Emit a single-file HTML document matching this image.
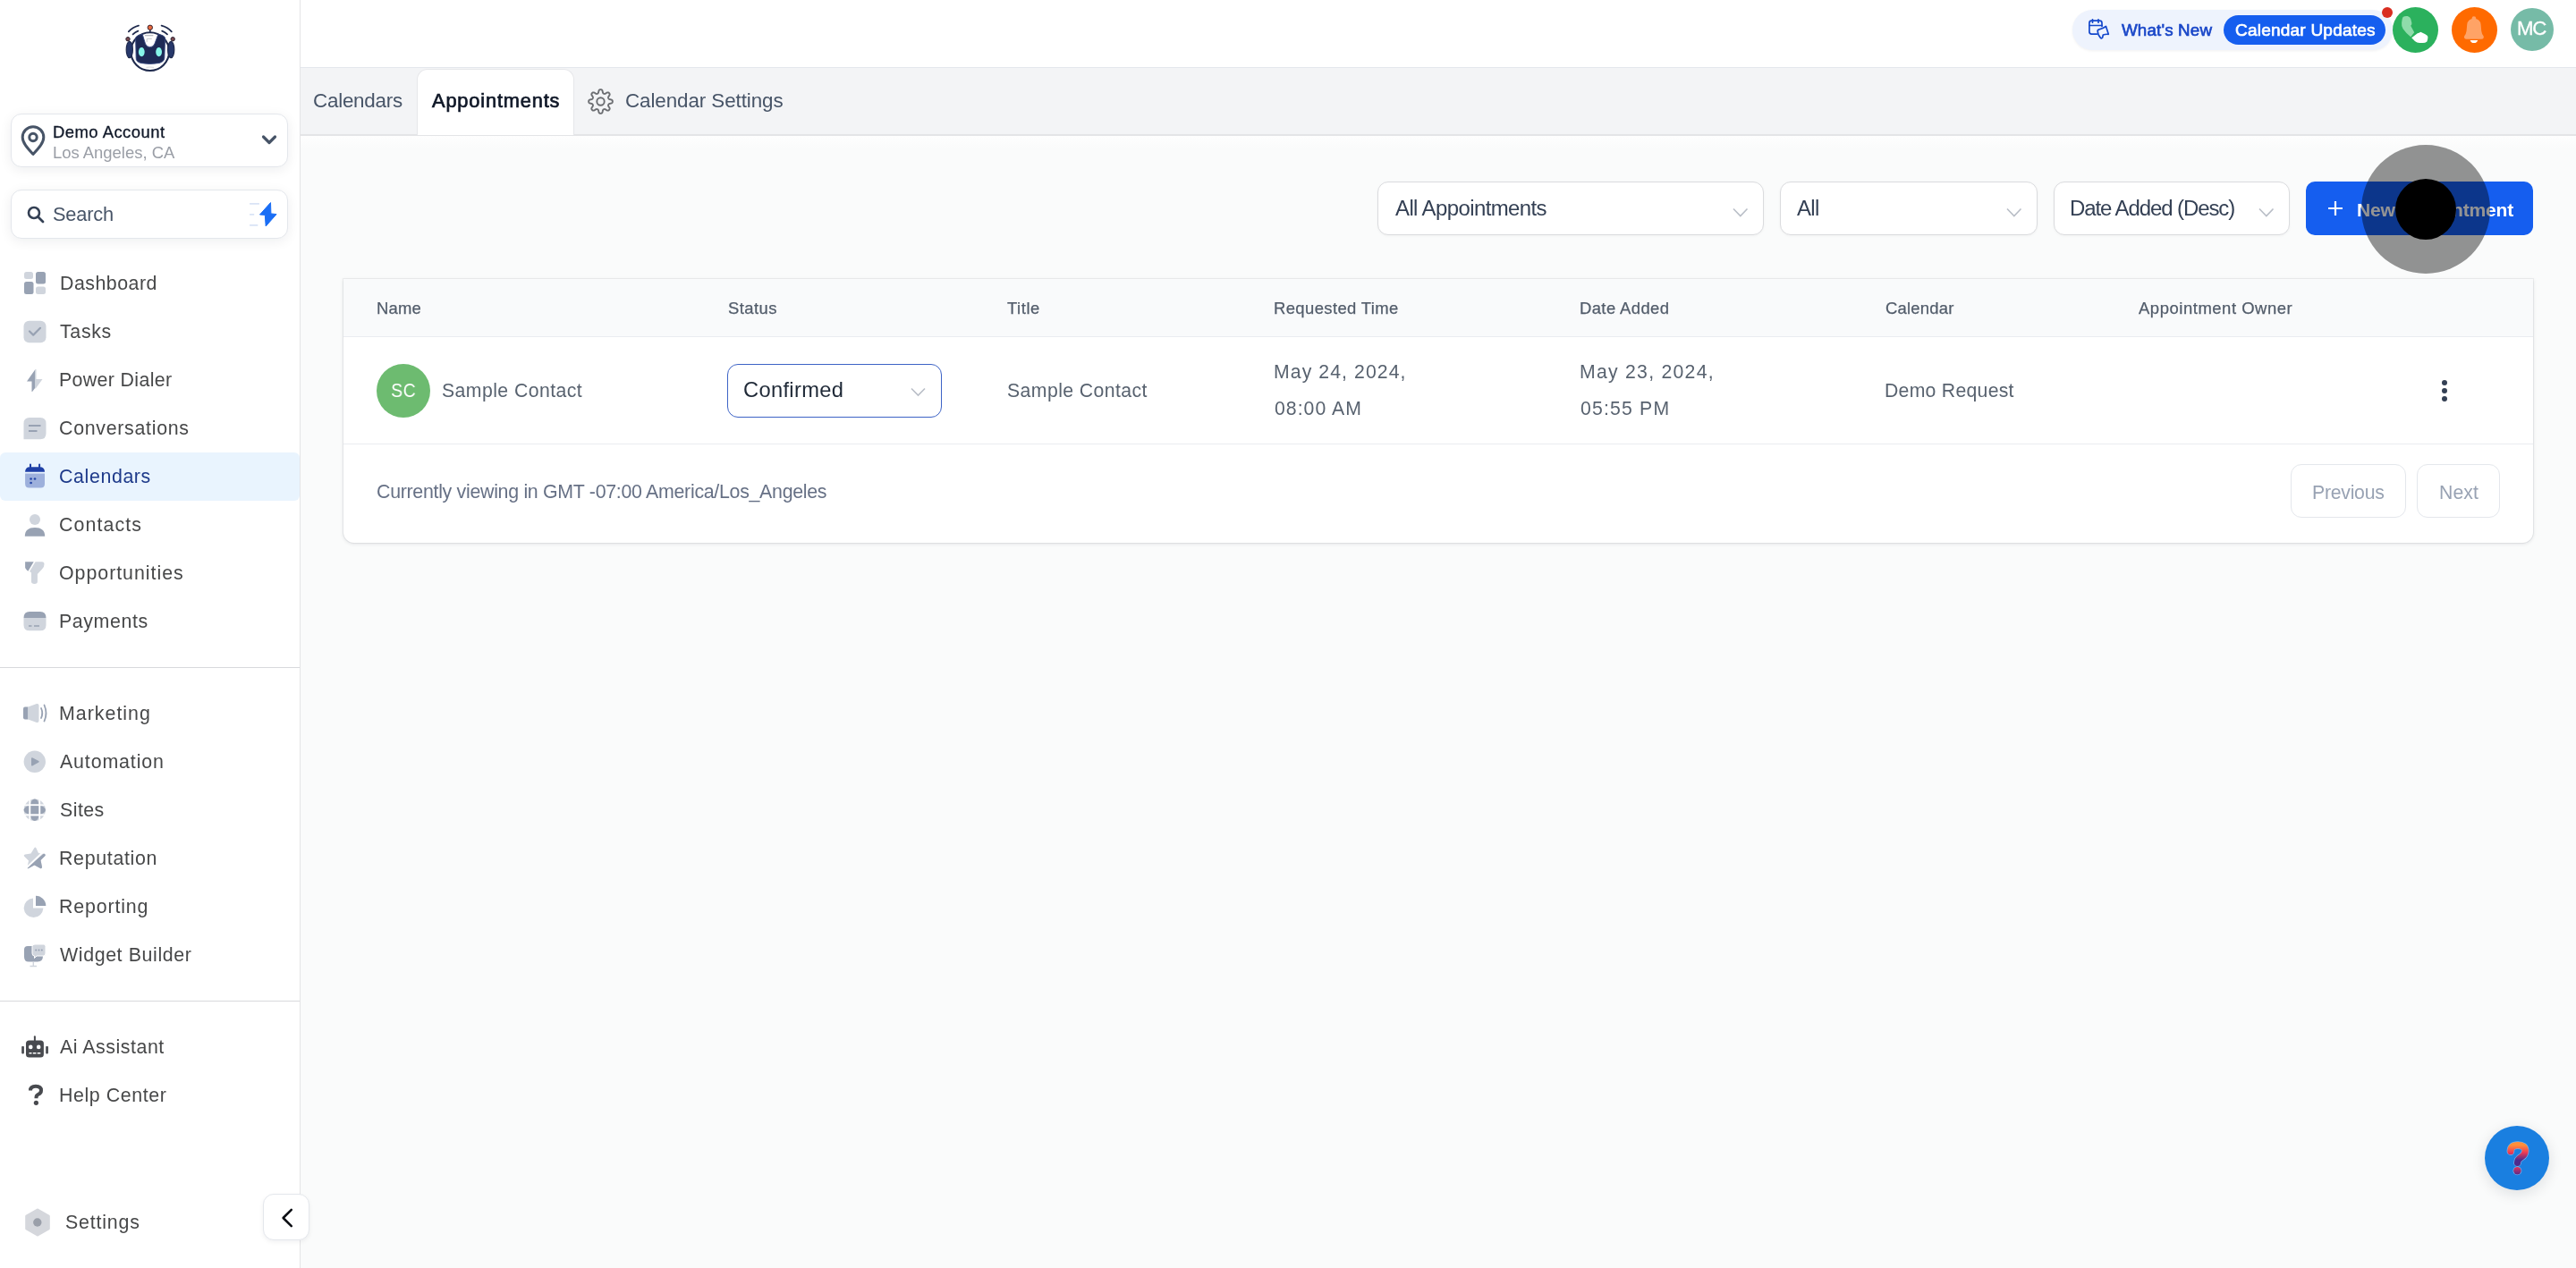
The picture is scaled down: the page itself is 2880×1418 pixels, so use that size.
<!DOCTYPE html>
<html><head><meta charset="utf-8">
<style>
html,body{margin:0;padding:0;width:2880px;height:1418px;overflow:hidden;background:#fafbfb;}
body{position:relative;font-family:"Liberation Sans",sans-serif;}
.t{position:absolute;white-space:nowrap;line-height:normal;font-family:"Liberation Sans",sans-serif;will-change:transform;}
.a{position:absolute;box-sizing:border-box;}
svg{position:absolute;overflow:visible;}
@media (max-width:1500px){html{zoom:0.5;}}
</style></head><body>
<!-- main background -->
<div class="a" style="left:336px;top:152px;width:2544px;height:1266px;background:#fafbfb;"></div>
<!-- sidebar -->
<div class="a" style="left:0;top:0;width:336px;height:1418px;background:#ffffff;border-right:1px solid #e4e4e6;"></div>
<!-- header -->
<div class="a" style="left:336px;top:0;width:2544px;height:76px;background:#ffffff;border-bottom:1px solid #e4e7ec;"></div>
<!-- tab bar -->
<div class="a" style="left:336px;top:76px;width:2544px;height:76px;background:#f3f4f6;border-bottom:2px solid #e3e4e7;"></div>
<div class="a" style="left:336px;top:152px;width:2544px;height:14px;background:linear-gradient(#fefefe,#fafbfb);"></div>
<div class="a" style="left:466px;top:77px;width:176px;height:74px;background:#ffffff;border-radius:12px 12px 0 0;border:1px solid #e6e7ea;border-bottom:none;"></div>

<!-- logo -->
<svg style="left:130px;top:20px" width="80" height="70" viewBox="0 0 80 70">
  <g fill="none" stroke="#1f2a4d" stroke-linecap="round" stroke-width="1.8">
    <path d="M13.8 15.3 Q18 10.6 25 8.6"/><path d="M18.6 18.3 Q21 16 24.4 14.6"/>
    <path d="M61.8 15.3 Q57.6 10.6 50.6 8.6"/><path d="M57 18.3 Q54.6 16 51.2 14.6"/>
  </g>
  <circle cx="37.7" cy="37.6" r="21.4" fill="#fff" stroke="#1f2a4d" stroke-width="2.1"/>
  <line x1="37.8" y1="13" x2="37.8" y2="16.5" stroke="#1f2a4d" stroke-width="1.6"/>
  <circle cx="37.8" cy="10.8" r="2.7" fill="#e86a3e" stroke="#3a2430" stroke-width="1"/>
  <circle cx="13" cy="23.7" r="2.2" fill="#7b4a4f" stroke="#2a2233" stroke-width="1"/>
  <circle cx="63.2" cy="23.7" r="2.2" fill="#7b4a4f" stroke="#2a2233" stroke-width="1"/>
  <ellipse cx="14.8" cy="35.5" rx="3.6" ry="9.2" fill="#27386b" stroke="#1f2a4d" stroke-width="1.2"/>
  <ellipse cx="61.2" cy="35.5" rx="3.6" ry="9.2" fill="#27386b" stroke="#1f2a4d" stroke-width="1.2"/>
  <path d="M21.6 22 Q23 19.3 29.2 18.2 L32.5 29 Q34 32.7 37.7 32.7 Q41.4 32.7 42.9 29 L46.9 18.2 Q53.2 19.3 54.6 22 L53.8 45 Q53.5 49 48 50.5 Q37.7 52.5 27.4 50.5 Q22 49 22.2 45 Z" fill="#1e2a56" stroke="#34467e" stroke-width="0.9"/>
  <path d="M32 19.7 H41.4" stroke="#b9bcc2" stroke-width="1.3"/>
  <path d="M34.2 27 V23.4 H39.8" fill="none" stroke="#c8cbd0" stroke-width="1"/>
  <path d="M33.5 55.4 Q37.7 54.6 42 55.4" fill="none" stroke="#d4d6da" stroke-width="1"/>
  <ellipse cx="28.3" cy="38.1" rx="3.4" ry="5.1" fill="#86f5e8"/>
  <ellipse cx="47.6" cy="38.1" rx="3.4" ry="5.1" fill="#86f5e8"/>
</svg>

<!-- account box -->
<div class="a" style="left:12px;top:127px;width:310px;height:60px;background:#fff;border:1px solid #e4e7ec;border-radius:12px;box-shadow:0 3px 14px rgba(16,24,40,0.07);"></div>
<svg style="left:22px;top:140px" width="30" height="35" viewBox="0 0 30 35">
  <path d="M15 32.5 C8 25 3.2 19.5 3.2 13.5 A11.8 11.8 0 0 1 26.8 13.5 C26.8 19.5 22 25 15 32.5 Z" fill="none" stroke="#475467" stroke-width="3" stroke-linejoin="round"/>
  <circle cx="15" cy="13.5" r="4.2" fill="none" stroke="#475467" stroke-width="3"/>
</svg>
<svg style="left:292px;top:150px" width="18" height="13" viewBox="0 0 18 13">
  <path d="M2.5 3 L9 9.5 L15.5 3" fill="none" stroke="#475467" stroke-width="3.2" stroke-linecap="round" stroke-linejoin="round"/>
</svg>

<!-- search box -->
<div class="a" style="left:12px;top:212px;width:310px;height:55px;background:#fff;border:1px solid #e4e7ec;border-radius:12px;box-shadow:0 3px 14px rgba(16,24,40,0.07);"></div>
<svg style="left:30px;top:230px" width="20" height="20" viewBox="0 0 20 20">
  <circle cx="8" cy="8" r="6" fill="none" stroke="#344054" stroke-width="2.6"/>
  <path d="M12.5 12.5 L18 18" stroke="#344054" stroke-width="2.8" stroke-linecap="round"/>
</svg>
<svg style="left:277px;top:225px" width="34" height="30" viewBox="0 0 34 30">
  <path d="M2.1 2.9 H12.9 M2.1 14.9 H7.2 M2.1 26.9 H11.3" stroke="#d9e3f6" stroke-width="1.8"/>
  <path d="M25.5 1.6 L13.5 15 L19.3 15.4 L20.2 28 L32 14.6 L25.9 13.9 Z" fill="#1a6ef5" stroke="#1a6ef5" stroke-width="1" stroke-linejoin="round"/>
</svg>

<!-- nav highlight -->
<div class="a" style="left:0;top:506px;width:335px;height:54px;background:#e9f4fe;border-radius:6px;"></div>

<!-- nav icons -->
<svg style="left:26px;top:303px" width="26" height="27" viewBox="0 0 26 27">
  <rect x="1" y="1" width="10" height="8" rx="2.5" fill="#d0d5dd"/>
  <rect x="14" y="1" width="11" height="13.5" rx="2.5" fill="#98a2b3"/>
  <rect x="1" y="12" width="10.5" height="14" rx="2.5" fill="#98a2b3"/>
  <rect x="14" y="17.5" width="11" height="8.5" rx="2.5" fill="#d0d5dd"/>
</svg>
<svg style="left:26px;top:358px" width="26" height="26" viewBox="0 0 26 26">
  <rect x="0.5" y="0.8" width="25" height="24.4" rx="6" fill="#d0d5dd"/>
  <path d="M7 12.5 L11.2 16.6 L19 8.8" fill="none" stroke="#98a2b3" stroke-width="2.2" stroke-linecap="round" stroke-linejoin="round"/>
</svg>
<svg style="left:29px;top:412px" width="20" height="27" viewBox="0 0 20 27">
  <path d="M10.5 1 L1 14.5 L6.5 14.5 L6.5 25.5 Q6.5 26.5 7.5 25.5 L10.5 21.5 Z" fill="#98a2b3"/>
  <path d="M10.5 1 L11.5 1 L11.5 12 L18.5 12 L10.5 23 Z" fill="#d0d5dd"/>
</svg>
<svg style="left:26px;top:466px" width="26" height="26" viewBox="0 0 26 26">
  <path d="M7 1 H19 Q25.5 1 25.5 7.5 V18.5 Q25.5 25.3 19 25.3 H0.5 V7.5 Q0.5 1 7 1 Z" fill="#d0d5dd"/>
  <path d="M6 10 H19.5 M6 16 H15.5" stroke="#98a2b3" stroke-width="2.2"/>
</svg>
<svg style="left:27px;top:518px" width="24" height="28" viewBox="0 0 24 28">
  <path d="M1.1 9.8 Q1.1 4.2 6.5 4.2 H17.6 Q23 4.2 23 9.8 Z" fill="#1f40a6"/>
  <path d="M1.1 11.6 H23 V23 Q23 27.6 18.5 27.6 H5.6 Q1.1 27.6 1.1 23 Z" fill="#9db0dc"/>
  <path d="M7 1.6 V5.5 M17.1 1.6 V5.5" stroke="#1f40a6" stroke-width="2" stroke-linecap="round"/>
  <circle cx="7.6" cy="17.5" r="1.35" fill="#2546a8"/><circle cx="12" cy="17.5" r="1.35" fill="#2546a8"/><circle cx="7.6" cy="22" r="1.35" fill="#2546a8"/>
</svg>
<svg style="left:27px;top:574px" width="24" height="27" viewBox="0 0 24 27">
  <circle cx="12" cy="6.9" r="6" fill="#d0d5dd"/>
  <path d="M0.8 25.8 Q0.8 16 12 16 Q23.2 16 23.2 25.8 Z" fill="#98a2b3"/>
</svg>
<svg style="left:27px;top:627px" width="24" height="27" viewBox="0 0 24 27">
  <path d="M1.1 1.2 H10.7 L4.4 11.7 Q1.1 9 1.1 7.5 Z" fill="#98a2b3"/>
  <path d="M12.6 1.2 H20 Q22.5 1.2 22.5 4 Q22.5 7 20 9.5 L14.9 14.9 V23.5 Q14.9 25.9 11.6 25.9 Q8 25.9 8 23.5 V13.4 L6.1 12 Z" fill="#d0d5dd"/>
</svg>
<svg style="left:26px;top:683px" width="26" height="24" viewBox="0 0 26 24">
  <path d="M0.5 8 Q0.5 1 7 1 H19 Q25.5 1 25.5 8 Z" fill="#98a2b3"/>
  <path d="M0.5 8 H25.5 V16 Q25.5 22.3 19 22.3 H7 Q0.5 22.3 0.5 16 Z" fill="#d0d5dd"/>
  <path d="M6 17 H9.5 M12 17 H18" stroke="#98a2b3" stroke-width="1.6"/>
</svg>

<!-- dividers -->
<div class="a" style="left:0;top:746px;width:335px;height:1px;background:#d8d9dc;"></div>
<div class="a" style="left:0;top:1119px;width:335px;height:1px;background:#d8d9dc;"></div>

<svg style="left:25px;top:786px" width="28" height="23" viewBox="0 0 28 23">
  <path d="M1 6.5 Q1 4.5 3 4.5 H6.5 V18.5 H3 Q1 18.5 1 16.5 Z" fill="#98a2b3"/>
  <path d="M6.5 4.5 L16 1 Q18.5 0.5 18.5 3 V20 Q18.5 22.5 16 22 L6.5 18.5 Z" fill="#d0d5dd"/>
  <path d="M21 6 Q23.5 11.5 21 17 M24.5 2.5 Q28.5 11.5 24.5 20.5" fill="none" stroke="#98a2b3" stroke-width="1.8" stroke-linecap="round"/>
</svg>
<svg style="left:26px;top:839px" width="26" height="26" viewBox="0 0 26 26">
  <circle cx="12.8" cy="12.8" r="12.2" fill="#d0d5dd"/>
  <path d="M9 9.2 Q9 7.6 10.6 8.4 L17.3 12 Q18.2 12.8 17.3 13.6 L10.6 17.3 Q9 18 9 16.4 Z" fill="#98a2b3"/>
</svg>
<svg style="left:26px;top:893px" width="26" height="26" viewBox="0 0 26 26">
  <circle cx="12.8" cy="12.8" r="12.2" fill="#d0d5dd"/>
  <g fill="#98a2b3">
    <rect x="8.3" y="8.2" width="9" height="9.2"/>
    <path d="M8.3 6.2 Q9 1 12.8 0.6 Q16.6 1 17.3 6.2 Z"/>
    <path d="M8.3 19.4 Q9 24.6 12.8 25 Q16.6 24.6 17.3 19.4 Z"/>
    <path d="M6.3 8.2 Q1.2 9 0.6 12.8 Q1.2 16.6 6.3 17.4 Z"/>
    <path d="M19.3 8.2 Q24.4 9 25 12.8 Q24.4 16.6 19.3 17.4 Z"/>
  </g>
  <g stroke="#fff" stroke-width="1.6" fill="none"><path d="M7.3 0 V26 M18.3 0 V26 M0 7.2 H26 M0 18.4 H26"/></g>
</svg>
<svg style="left:26px;top:947px" width="26" height="26" viewBox="0 0 26 26">
  <path d="M12.5 1 Q13.5 0 14.5 1.5 L17 7 L23.5 8 Q25.5 8.5 24.5 10 L19.5 15 L21 22.5 Q21 24.8 19 24 L12.5 20.5 L6 24 Q4.5 24.8 4.5 23 L6 15.5 L1 10.5 Q0 9 2 8.5 L8.5 7.5 Z" fill="#d0d5dd"/>
  <path d="M23 7.5 Q25.5 8.5 24.5 10 L19.5 15 L21 22.5 Q21 24.8 19 24 L12.5 20.5 L6 24 Q4 25 4.5 23 Z" fill="#98a2b3"/>
  <path d="M2 25 L24 4" stroke="#fff" stroke-width="1.8"/>
</svg>
<svg style="left:26px;top:1001px" width="26" height="26" viewBox="0 0 26 26">
  <path d="M11 3.5 A10.8 10.8 0 1 0 22.3 14.5 L11 14.5 Z" fill="#d0d5dd"/>
  <path d="M14 0.8 A11.4 11.4 0 0 1 25.3 12 L14 12 Z" fill="#98a2b3"/>
</svg>
<svg style="left:26px;top:1055px" width="26" height="27" viewBox="0 0 26 27">
  <path d="M5 3 H22 V14 Q22 20.5 16 20.5 H6 Q1 20.5 1 15 V7 Q1 3 5 3 Z" fill="#98a2b3"/>
  <path d="M11.3 21 V25.5 M7.5 25.5 H15" stroke="#d0d5dd" stroke-width="1.4"/>
  <path d="M13 1 H23 Q25 1 25 3.5 V11 Q25 14 22.5 14 H15 L12.5 16.5 V14 Q10 14 10 11 V3.5 Q10 1 13 1 Z" fill="#d0d5dd" stroke="#fff" stroke-width="1"/>
  <circle cx="14.2" cy="7.5" r="1" fill="#98a2b3"/><circle cx="17.5" cy="7.5" r="1" fill="#98a2b3"/><circle cx="20.8" cy="7.5" r="1" fill="#98a2b3"/>
</svg>

<!-- Ai assistant -->
<svg style="left:23px;top:1158px" width="32" height="26" viewBox="0 0 32 26">
  <path d="M15.9 1.2 V5.8" stroke="#484a4f" stroke-width="2" stroke-linecap="round"/>
  <rect x="6" y="5.5" width="19.9" height="19.1" rx="3.5" fill="#484a4f"/>
  <rect x="1.2" y="11.9" width="2.7" height="8.5" rx="0.8" fill="#484a4f"/>
  <rect x="28.2" y="11.9" width="2.7" height="8.5" rx="0.8" fill="#484a4f"/>
  <circle cx="11.3" cy="12.9" r="2.3" fill="#fff"/><circle cx="20.2" cy="12.9" r="2.3" fill="#fff"/>
  <path d="M9.5 19.7 H12.5 M13.8 19.7 H17.4 M18.7 19.7 H22.3" stroke="#fff" stroke-width="1.6"/>
</svg>
<svg style="left:31px;top:1212px" width="18" height="25" viewBox="0 0 18 25">
  <path d="M3 7.5 Q3 2.8 9 2.8 Q15 2.8 15 7.5 Q15 10.5 11.5 12 Q9.5 13 9.5 15.5 V16.2" fill="none" stroke="#484a4f" stroke-width="4" stroke-linejoin="round"/>
  <circle cx="9.4" cy="21.3" r="2.6" fill="#484a4f"/>
</svg>

<!-- settings -->
<svg style="left:27px;top:1351px" width="30" height="32" viewBox="0 0 30 32">
  <path d="M15 2 L27.3 9 V23 L15 30 L2.7 23 V9 Z" fill="#d5d7dc" stroke="#d5d7dc" stroke-width="3" stroke-linejoin="round"/>
  <circle cx="14.8" cy="16" r="4.7" fill="#9a9fa9"/>
</svg>
<!-- collapse button -->
<div class="a" style="left:294px;top:1335px;width:52px;height:52px;background:#fff;border:1px solid #e4e7ec;border-radius:12px;box-shadow:0 2px 5px rgba(16,24,40,0.06);"></div>
<svg style="left:313px;top:1351px" width="16" height="22" viewBox="0 0 16 22">
  <path d="M12.8 1.8 L3.6 11 L12.8 20.2" fill="none" stroke="#0b0d12" stroke-width="2.5" stroke-linecap="round" stroke-linejoin="round"/>
</svg>

<!-- tab gear -->
<svg style="left:650px;top:92px" width="43" height="43" viewBox="0 0 43 43">
  <path d="M21.50 8.15 L21.85 8.17 L22.20 8.22 L22.54 8.32 L22.87 8.50 L23.17 8.80 L23.43 9.28 L23.64 9.95 L23.80 10.69 L23.94 11.36 L24.09 11.85 L24.26 12.17 L24.46 12.39 L24.67 12.54 L24.89 12.67 L25.12 12.77 L25.35 12.86 L25.59 12.93 L25.85 12.96 L26.14 12.95 L26.50 12.84 L26.95 12.61 L27.52 12.23 L28.16 11.82 L28.77 11.49 L29.30 11.34 L29.73 11.34 L30.09 11.45 L30.40 11.62 L30.68 11.82 L30.94 12.06 L31.18 12.32 L31.38 12.60 L31.55 12.91 L31.66 13.27 L31.66 13.70 L31.51 14.23 L31.18 14.84 L30.77 15.48 L30.39 16.05 L30.16 16.50 L30.05 16.86 L30.04 17.15 L30.07 17.41 L30.14 17.65 L30.23 17.88 L30.33 18.11 L30.46 18.33 L30.61 18.54 L30.83 18.74 L31.15 18.91 L31.64 19.06 L32.31 19.20 L33.05 19.36 L33.72 19.57 L34.20 19.83 L34.50 20.13 L34.68 20.46 L34.78 20.80 L34.83 21.15 L34.85 21.50 L34.83 21.85 L34.78 22.20 L34.68 22.54 L34.50 22.87 L34.20 23.17 L33.72 23.43 L33.05 23.64 L32.31 23.80 L31.64 23.94 L31.15 24.09 L30.83 24.26 L30.61 24.46 L30.46 24.67 L30.33 24.89 L30.23 25.12 L30.14 25.35 L30.07 25.59 L30.04 25.85 L30.05 26.14 L30.16 26.50 L30.39 26.95 L30.77 27.52 L31.18 28.16 L31.51 28.77 L31.66 29.30 L31.66 29.73 L31.55 30.09 L31.38 30.40 L31.18 30.68 L30.94 30.94 L30.68 31.18 L30.40 31.38 L30.09 31.55 L29.73 31.66 L29.30 31.66 L28.77 31.51 L28.16 31.18 L27.52 30.77 L26.95 30.39 L26.50 30.16 L26.14 30.05 L25.85 30.04 L25.59 30.07 L25.35 30.14 L25.12 30.23 L24.89 30.33 L24.67 30.46 L24.46 30.61 L24.26 30.83 L24.09 31.15 L23.94 31.64 L23.80 32.31 L23.64 33.05 L23.43 33.72 L23.17 34.20 L22.87 34.50 L22.54 34.68 L22.20 34.78 L21.85 34.83 L21.50 34.85 L21.15 34.83 L20.80 34.78 L20.46 34.68 L20.13 34.50 L19.83 34.20 L19.57 33.72 L19.36 33.05 L19.20 32.31 L19.06 31.64 L18.91 31.15 L18.74 30.83 L18.54 30.61 L18.33 30.46 L18.11 30.33 L17.88 30.23 L17.65 30.14 L17.41 30.07 L17.15 30.04 L16.86 30.05 L16.50 30.16 L16.05 30.39 L15.48 30.77 L14.84 31.18 L14.23 31.51 L13.70 31.66 L13.27 31.66 L12.91 31.55 L12.60 31.38 L12.32 31.18 L12.06 30.94 L11.82 30.68 L11.62 30.40 L11.45 30.09 L11.34 29.73 L11.34 29.30 L11.49 28.77 L11.82 28.16 L12.23 27.52 L12.61 26.95 L12.84 26.50 L12.95 26.14 L12.96 25.85 L12.93 25.59 L12.86 25.35 L12.77 25.12 L12.67 24.89 L12.54 24.67 L12.39 24.46 L12.17 24.26 L11.85 24.09 L11.36 23.94 L10.69 23.80 L9.95 23.64 L9.28 23.43 L8.80 23.17 L8.50 22.87 L8.32 22.54 L8.22 22.20 L8.17 21.85 L8.15 21.50 L8.17 21.15 L8.22 20.80 L8.32 20.46 L8.50 20.13 L8.80 19.83 L9.28 19.57 L9.95 19.36 L10.69 19.20 L11.36 19.06 L11.85 18.91 L12.17 18.74 L12.39 18.54 L12.54 18.33 L12.67 18.11 L12.77 17.88 L12.86 17.65 L12.93 17.41 L12.96 17.15 L12.95 16.86 L12.84 16.50 L12.61 16.05 L12.23 15.48 L11.82 14.84 L11.49 14.23 L11.34 13.70 L11.34 13.27 L11.45 12.91 L11.62 12.60 L11.82 12.32 L12.06 12.06 L12.32 11.82 L12.60 11.62 L12.91 11.45 L13.27 11.34 L13.70 11.34 L14.23 11.49 L14.84 11.82 L15.48 12.23 L16.05 12.61 L16.50 12.84 L16.86 12.95 L17.15 12.96 L17.41 12.93 L17.65 12.86 L17.88 12.77 L18.11 12.67 L18.33 12.54 L18.54 12.39 L18.74 12.17 L18.91 11.85 L19.06 11.36 L19.20 10.69 L19.36 9.95 L19.57 9.28 L19.83 8.80 L20.13 8.50 L20.46 8.32 L20.80 8.22 L21.15 8.17 Z" fill="none" stroke="#6c6e72" stroke-width="1.9" stroke-linejoin="round"/>
  <circle cx="21.5" cy="21.5" r="4.2" fill="none" stroke="#6c6e72" stroke-width="1.9"/>
</svg>

<!-- header right -->
<div class="a" style="left:2317px;top:11px;width:358px;height:45px;background:#eef3fd;border-radius:23px;box-shadow:0 1px 3px rgba(16,24,40,0.06);"></div>
<div class="a" style="left:2486px;top:17px;width:181px;height:33px;background:#155eef;border-radius:17px;"></div>
<svg style="left:2325px;top:14px" width="45" height="36" viewBox="0 0 45 36">
  <g fill="none" stroke="#1448cc" stroke-width="1.7" stroke-linejoin="round" stroke-linecap="round">
    <path d="M19.5 24.1 H13.5 Q10.9 24.1 10.9 21.5 V11.7 Q10.9 9.1 13.5 9.1 H22.4 Q25 9.1 25 11.7 V15.5"/>
    <path d="M10.9 14.5 H25"/><path d="M14.5 7.8 V11.2 M21 7.8 V11.2"/>
    <path d="M20.2 20.8 Q20 19.2 22 18.8 Q26 18 29.5 15.5 L32.3 24.3 Q29 24 26.3 25 L25.6 28 Q24.5 29.5 23.3 28.2 L21.2 25 Q20.5 23 20.2 20.8 Z"/>
  </g>
</svg>
<div class="a" style="left:2663px;top:8px;width:12px;height:12px;background:#d92d20;border-radius:50%;"></div>
<div class="a" style="left:2675px;top:8px;width:51px;height:51px;background:#2bb15d;border-radius:50%;"></div>
<svg style="left:2675px;top:8px" width="51" height="51" viewBox="0 0 51 51">
  <path d="M11.6 11.1 Q14 9.6 16.7 10.1 Q19.6 11 20.2 13.1 L21.4 17.7 Q21.6 19.6 20.2 20.7 L24.2 28.3 L20.2 33.3 Q14.5 28.5 11.6 24.2 Q9.6 20.5 10.1 17.2 Q10.3 13 11.6 11.1 Z" fill="#8fdcaa"/>
  <path d="M21.2 34.3 L27.8 29.3 Q29.5 28.8 31.3 27.8 L36 30 Q39.6 31.8 39.4 33.8 Q39.3 36.6 38.4 38.4 Q36.2 40.3 33.3 40.1 Q30 40 27.3 39.4 Q24.5 38 23.2 36.3 Z" fill="#ffffff"/>
</svg>
<div class="a" style="left:2741px;top:8px;width:51px;height:51px;background:#ff6a00;border-radius:50%;"></div>
<svg style="left:2741px;top:8px" width="51" height="51" viewBox="0 0 51 51">
  <circle cx="24.9" cy="12.6" r="2.3" fill="#ffa366"/>
  <path d="M24.9 12.8 Q31.6 12.8 32.6 19.5 L33.2 26.5 Q33.6 30 35.6 32.2 Q36.6 35.6 33.2 35.8 L16.6 35.8 Q13.2 35.6 14.2 32.2 Q16.2 30 16.6 26.5 L17.2 19.5 Q18.2 12.8 24.9 12.8 Z" fill="#ffa366"/>
  <path d="M20.6 36.9 H29.2 Q28.4 40 24.9 40 Q21.4 40 20.6 36.9 Z" fill="#ffffff"/>
</svg>
<div class="a" style="left:2807px;top:9px;width:48px;height:48px;background:#76bba7;border-radius:50%;"></div>

<!-- filters -->
<div class="a" style="left:1540px;top:203px;width:432px;height:60px;background:#fff;border:1px solid #dadbde;border-radius:12px;box-shadow:0 1px 3px rgba(0,0,0,0.04);"></div>
<div class="a" style="left:1990px;top:203px;width:288px;height:60px;background:#fff;border:1px solid #dadbde;border-radius:12px;box-shadow:0 1px 3px rgba(0,0,0,0.04);"></div>
<div class="a" style="left:2296px;top:203px;width:264px;height:60px;background:#fff;border:1px solid #dadbde;border-radius:12px;box-shadow:0 1px 3px rgba(0,0,0,0.04);"></div>
<svg style="left:1936px;top:231px" width="20" height="13" viewBox="0 0 20 13"><path d="M2 2.5 L9.8 10.5 L17.5 2.5" fill="none" stroke="#b9bec7" stroke-width="1.6"/></svg>
<svg style="left:2242px;top:231px" width="20" height="13" viewBox="0 0 20 13"><path d="M2 2.5 L9.8 10.5 L17.5 2.5" fill="none" stroke="#b9bec7" stroke-width="1.6"/></svg>
<svg style="left:2524px;top:231px" width="20" height="13" viewBox="0 0 20 13"><path d="M2 2.5 L9.8 10.5 L17.5 2.5" fill="none" stroke="#b9bec7" stroke-width="1.6"/></svg>
<div class="a" style="left:2578px;top:203px;width:254px;height:60px;background:#155eef;border-radius:10px;"></div>
<svg style="left:2602px;top:224px" width="18" height="18" viewBox="0 0 18 18"><path d="M9 1 V17 M1 9 H17" stroke="#fff" stroke-width="2.2"/></svg>

<!-- table card -->
<div class="a" style="left:384px;top:312px;width:2448px;height:295px;background:#fff;border-radius:0 0 12px 12px;box-shadow:0 0 0 1px rgba(16,24,40,0.05), 0 1px 4px rgba(16,24,40,0.12);">
  <div class="a" style="left:0;top:0;width:100%;height:65px;background:#f9fafb;border-bottom:1px solid #eaecf0;"></div>
  <div class="a" style="left:0;top:184px;width:100%;height:1px;background:#eaecf0;"></div>
</div>
<div class="a" style="left:421px;top:407px;width:60px;height:60px;background:#6dbb70;border-radius:50%;"></div>
<div class="a" style="left:813px;top:407px;width:240px;height:60px;background:#fff;border:1.5px solid #3d63c6;border-radius:12px;"></div>
<svg style="left:1017px;top:432px" width="20" height="13" viewBox="0 0 20 13"><path d="M2 2.5 L9.5 10 L17 2.5" fill="none" stroke="#b9bec7" stroke-width="1.6"/></svg>
<div class="a" style="left:2730px;top:425px;width:6px;height:6px;background:#344054;border-radius:50%;"></div>
<div class="a" style="left:2730px;top:434px;width:6px;height:6px;background:#344054;border-radius:50%;"></div>
<div class="a" style="left:2730px;top:443px;width:6px;height:6px;background:#344054;border-radius:50%;"></div>
<div class="a" style="left:2561px;top:519px;width:129px;height:60px;background:#fff;border:1.5px solid #e4e7ec;border-radius:12px;"></div>
<div class="a" style="left:2702px;top:519px;width:93px;height:60px;background:#fff;border:1.5px solid #e4e7ec;border-radius:12px;"></div>

<!-- help fab -->
<div class="a" style="left:2778px;top:1259px;width:72px;height:72px;background:#1a7fe0;border-radius:50%;box-shadow:0 4px 16px rgba(16,24,40,0.12);"></div>
<svg style="left:2800px;top:1275px" width="30" height="40" viewBox="0 0 30 40">
  <defs><linearGradient id="qg" x1="0" y1="0" x2="0" y2="1"><stop offset="0" stop-color="#ff8f3a"/><stop offset="0.42" stop-color="#ee3a55"/><stop offset="0.85" stop-color="#4f2b8c"/><stop offset="1" stop-color="#4f2b8c"/></linearGradient><linearGradient id="qd" x1="0" y1="0" x2="0" y2="1"><stop offset="0" stop-color="#e0355c"/><stop offset="1" stop-color="#5a2a8a"/></linearGradient></defs>
  <path d="M6.9 12.6 Q7 5.6 15 5.6 Q23.2 5.6 23.2 12 Q23.2 16.5 18.8 19 Q14.6 21.5 14.5 25.3" fill="none" stroke="#ffffff" stroke-opacity="0.4" stroke-width="8.6" stroke-linecap="round"/>
  <path d="M6.9 12.6 Q7 5.6 15 5.6 Q23.2 5.6 23.2 12 Q23.2 16.5 18.8 19 Q14.6 21.5 14.5 25.3" fill="none" stroke="url(#qg)" stroke-width="7.2" stroke-linecap="round"/>
  <circle cx="14.4" cy="34.3" r="4.9" fill="#ffffff" fill-opacity="0.4"/>
  <circle cx="14.4" cy="34.3" r="4.2" fill="url(#qd)"/>
</svg>

<div class="t" style="left:58.90px;top:137.19px;font-size:18.46px;letter-spacing:0.473px;font-weight:400;color:#101828;-webkit-text-stroke:0.3px #101828;">Demo Account</div>
<div class="t" style="left:58.90px;top:160.19px;font-size:18.46px;letter-spacing:-0.003px;font-weight:400;color:#9a9ea6;">Los Angeles, CA</div>
<div class="t" style="left:59.10px;top:227.17px;font-size:21.8px;letter-spacing:-0.188px;font-weight:400;color:#475467;">Search</div>
<div class="t" style="left:66.50px;top:305.06px;font-size:21.37px;letter-spacing:0.498px;font-weight:400;color:#474849;">Dashboard</div>
<div class="t" style="left:66.60px;top:359.06px;font-size:21.37px;letter-spacing:0.671px;font-weight:400;color:#474849;">Tasks</div>
<div class="t" style="left:65.60px;top:413.06px;font-size:21.37px;letter-spacing:0.350px;font-weight:400;color:#474849;">Power Dialer</div>
<div class="t" style="left:65.60px;top:467.06px;font-size:21.37px;letter-spacing:0.704px;font-weight:400;color:#474849;">Conversations</div>
<div class="t" style="left:65.60px;top:521.06px;font-size:21.37px;letter-spacing:0.615px;font-weight:400;color:#1e3a8a;">Calendars</div>
<div class="t" style="left:65.60px;top:575.06px;font-size:21.37px;letter-spacing:1.084px;font-weight:400;color:#474849;">Contacts</div>
<div class="t" style="left:65.60px;top:629.06px;font-size:21.37px;letter-spacing:0.970px;font-weight:400;color:#474849;">Opportunities</div>
<div class="t" style="left:65.60px;top:683.06px;font-size:21.37px;letter-spacing:0.601px;font-weight:400;color:#474849;">Payments</div>
<div class="t" style="left:65.70px;top:785.56px;font-size:21.37px;letter-spacing:1.012px;font-weight:400;color:#474849;">Marketing</div>
<div class="t" style="left:66.70px;top:839.56px;font-size:21.37px;letter-spacing:0.870px;font-weight:400;color:#474849;">Automation</div>
<div class="t" style="left:66.70px;top:893.56px;font-size:21.37px;letter-spacing:0.449px;font-weight:400;color:#474849;">Sites</div>
<div class="t" style="left:65.70px;top:947.56px;font-size:21.37px;letter-spacing:0.685px;font-weight:400;color:#474849;">Reputation</div>
<div class="t" style="left:65.70px;top:1001.56px;font-size:21.37px;letter-spacing:0.846px;font-weight:400;color:#474849;">Reporting</div>
<div class="t" style="left:66.70px;top:1055.56px;font-size:21.37px;letter-spacing:0.616px;font-weight:400;color:#474849;">Widget Builder</div>
<div class="t" style="left:67.00px;top:1159.06px;font-size:21.37px;letter-spacing:0.532px;font-weight:400;color:#474849;">Ai Assistant</div>
<div class="t" style="left:66.00px;top:1213.06px;font-size:21.37px;letter-spacing:0.584px;font-weight:400;color:#474849;">Help Center</div>
<div class="t" style="left:72.80px;top:1355.26px;font-size:21.37px;letter-spacing:0.815px;font-weight:400;color:#474849;">Settings</div>
<div class="t" style="left:350.40px;top:99.75px;font-size:22.38px;letter-spacing:-0.225px;font-weight:400;color:#475467;">Calendars</div>
<div class="t" style="left:483.00px;top:100.27px;font-size:21.8px;letter-spacing:0.838px;font-weight:400;color:#101828;-webkit-text-stroke:0.7px #101828;">Appointments</div>
<div class="t" style="left:699.00px;top:99.75px;font-size:22.38px;letter-spacing:-0.074px;font-weight:400;color:#475467;">Calendar Settings</div>
<div class="t" style="left:2371.60px;top:22.83px;font-size:18.75px;letter-spacing:0.167px;font-weight:400;color:#1a47c8;-webkit-text-stroke:0.65px #1a47c8;">What's New</div>
<div class="t" style="left:2498.60px;top:22.77px;font-size:19.04px;letter-spacing:0.208px;font-weight:400;color:#ffffff;-webkit-text-stroke:0.65px #ffffff;">Calendar Updates</div>
<div class="t" style="left:2813.80px;top:19.47px;font-size:22.24px;letter-spacing:-1.221px;font-weight:400;color:#ffffff;-webkit-text-stroke:0.3px #ffffff;">MC</div>
<div class="t" style="left:1559.50px;top:219.30px;font-size:23.98px;letter-spacing:-0.598px;font-weight:400;color:#344054;">All Appointments</div>
<div class="t" style="left:2009.10px;top:219.30px;font-size:23.98px;letter-spacing:-0.656px;font-weight:400;color:#344054;">All</div>
<div class="t" style="left:2314.40px;top:219.30px;font-size:23.98px;letter-spacing:-1.084px;font-weight:400;color:#344054;">Date Added (Desc)</div>
<div class="t" style="left:2634.70px;top:223.12px;font-size:21.08px;letter-spacing:-0.224px;font-weight:700;color:#ffffff;">New Appointment</div>
<div class="t" style="left:420.80px;top:334.29px;font-size:18.46px;letter-spacing:0.191px;font-weight:400;color:#525c6a;-webkit-text-stroke:0.25px #525c6a;">Name</div>
<div class="t" style="left:813.60px;top:334.29px;font-size:18.46px;letter-spacing:0.450px;font-weight:400;color:#525c6a;-webkit-text-stroke:0.25px #525c6a;">Status</div>
<div class="t" style="left:1126.00px;top:334.29px;font-size:18.46px;letter-spacing:0.527px;font-weight:400;color:#525c6a;-webkit-text-stroke:0.25px #525c6a;">Title</div>
<div class="t" style="left:1423.60px;top:334.29px;font-size:18.46px;letter-spacing:0.390px;font-weight:400;color:#525c6a;-webkit-text-stroke:0.25px #525c6a;">Requested Time</div>
<div class="t" style="left:1765.80px;top:334.29px;font-size:18.46px;letter-spacing:0.397px;font-weight:400;color:#525c6a;-webkit-text-stroke:0.25px #525c6a;">Date Added</div>
<div class="t" style="left:2108.40px;top:334.29px;font-size:18.46px;letter-spacing:0.231px;font-weight:400;color:#525c6a;-webkit-text-stroke:0.25px #525c6a;">Calendar</div>
<div class="t" style="left:2390.50px;top:334.29px;font-size:18.46px;letter-spacing:0.549px;font-weight:400;color:#525c6a;-webkit-text-stroke:0.25px #525c6a;">Appointment Owner</div>
<div class="t" style="left:437.00px;top:423.95px;font-size:22.38px;letter-spacing:0.500px;font-weight:400;color:#ffffff;transform:scaleX(0.8710);transform-origin:1.00px 0;">SC</div>
<div class="t" style="left:494.00px;top:424.80px;font-size:21.22px;letter-spacing:0.441px;font-weight:400;color:#58626f;">Sample Contact</div>
<div class="t" style="left:831.00px;top:423.16px;font-size:23.69px;letter-spacing:0.326px;font-weight:400;color:#1f2937;">Confirmed</div>
<div class="t" style="left:1125.70px;top:425.00px;font-size:21.22px;letter-spacing:0.425px;font-weight:400;color:#58626f;">Sample Contact</div>
<div class="t" style="left:1423.60px;top:403.70px;font-size:21.22px;letter-spacing:1.085px;font-weight:400;color:#58626f;">May 24, 2024,</div>
<div class="t" style="left:1424.60px;top:445.40px;font-size:21.22px;letter-spacing:1.036px;font-weight:400;color:#58626f;">08:00 AM</div>
<div class="t" style="left:1765.80px;top:403.70px;font-size:21.22px;letter-spacing:1.260px;font-weight:400;color:#58626f;">May 23, 2024,</div>
<div class="t" style="left:1766.80px;top:445.40px;font-size:21.22px;letter-spacing:1.179px;font-weight:400;color:#58626f;">05:55 PM</div>
<div class="t" style="left:2107.40px;top:424.60px;font-size:21.22px;letter-spacing:0.270px;font-weight:400;color:#58626f;">Demo Request</div>
<div class="t" style="left:420.70px;top:537.56px;font-size:21.37px;letter-spacing:-0.298px;font-weight:400;color:#667085;">Currently viewing in GMT -07:00 America/Los_Angeles</div>
<div class="t" style="left:2584.80px;top:538.70px;font-size:21.22px;letter-spacing:-0.249px;font-weight:400;color:#98a2b3;">Previous</div>
<div class="t" style="left:2726.60px;top:538.70px;font-size:21.22px;letter-spacing:0.055px;font-weight:400;color:#98a2b3;">Next</div>

<!-- click indicator -->
<div class="a" style="left:2640px;top:162px;width:144px;height:144px;background:rgba(0,0,0,0.42);border-radius:50%;"></div>
<div class="a" style="left:2678px;top:200px;width:68px;height:68px;background:#000;border-radius:50%;"></div>
</body></html>
